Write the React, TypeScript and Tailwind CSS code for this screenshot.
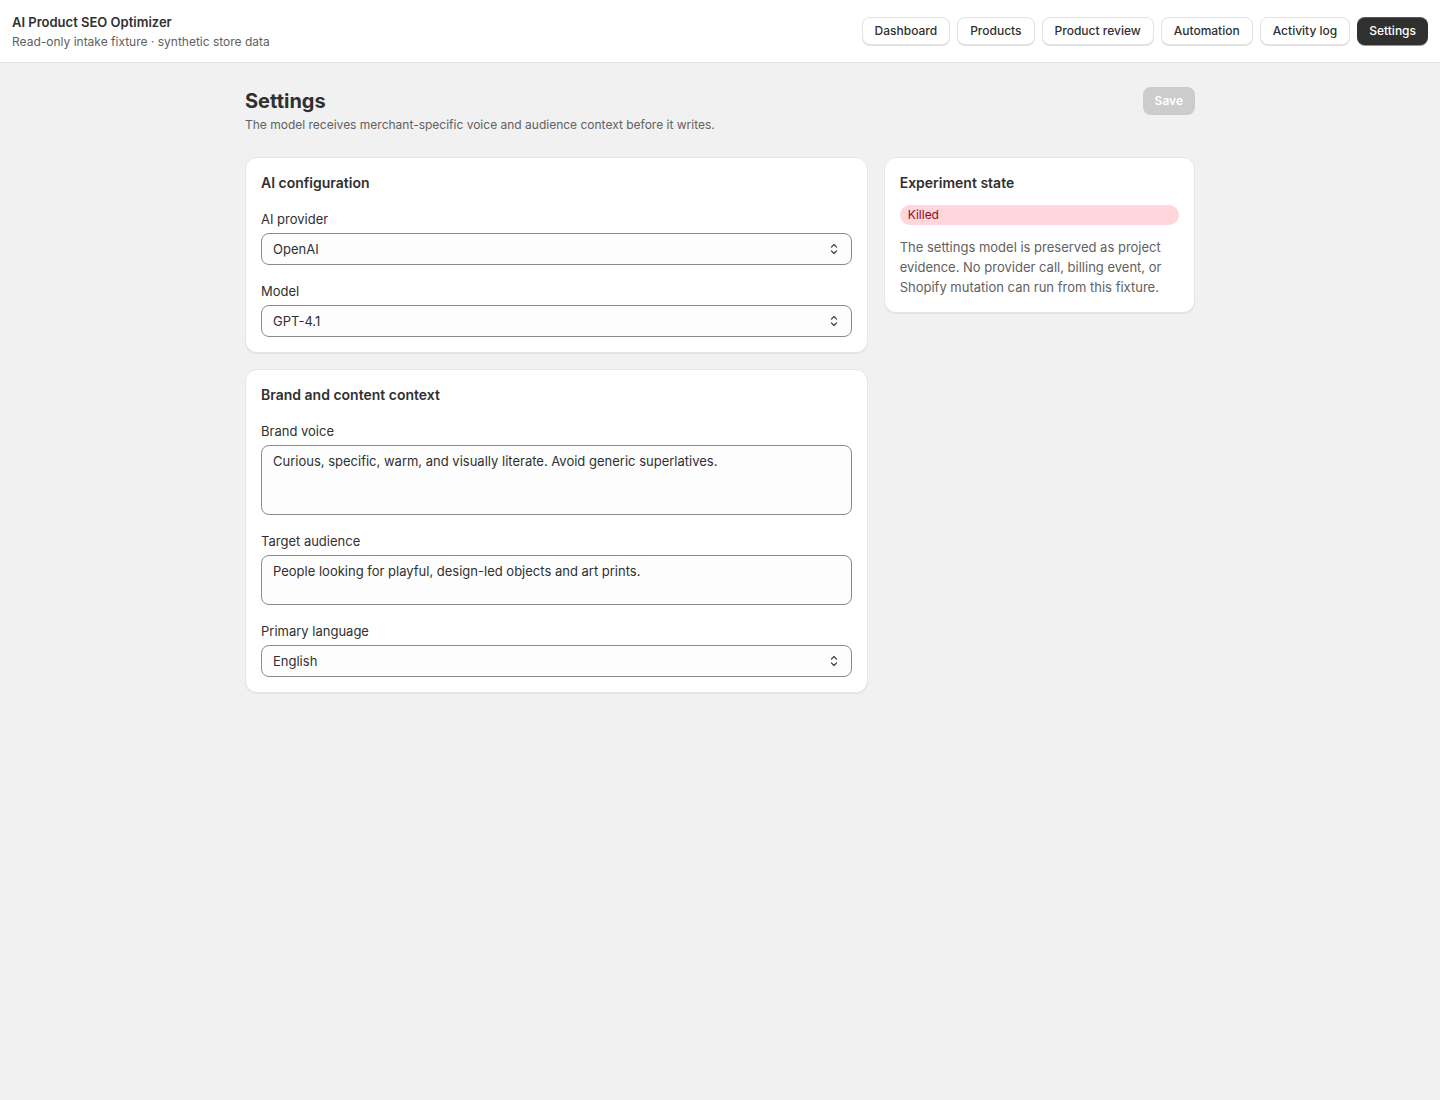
import type { ReactNode } from "react"

const NAV = ["Dashboard", "Products", "Product review", "Automation", "Activity log", "Settings"]

function Card({ children }: { children: ReactNode }) {
  return (
    <div className="rounded-xl bg-white p-[15px] border border-[#e6e6e6] shadow-[0_1px_0_rgba(0,0,0,0.06)]">
      {children}
    </div>
  )
}

function SelectIcon() {
  return (
    <svg width="12" height="16" viewBox="0 0 12 16" fill="none" stroke="#4a4a4a" strokeWidth="1.3" strokeLinecap="round" strokeLinejoin="round">
      <path d="M3.5 6 L6 3.5 L8.5 6" />
      <path d="M3.5 10 L6 12.5 L8.5 10" />
    </svg>
  )
}

function Select({ label, value }: { label: string; value: string }) {
  return (
    <div className="flex flex-col gap-1">
      <span className="text-[13px] leading-5 text-[#303030]">{label}</span>
      <div className="h-8 flex items-center justify-between rounded-lg border border-[#8a8a8a] bg-[#fdfdfd] px-[11px]">
        <span className="text-[13px] leading-5 text-[#303030]">{value}</span>
        <SelectIcon />
      </div>
    </div>
  )
}

function TextArea({ label, value, h }: { label: string; value: string; h: string }) {
  return (
    <div className="flex flex-col gap-1">
      <span className="text-[13px] leading-5 text-[#303030]">{label}</span>
      <div className={`${h} rounded-lg border border-[#8a8a8a] bg-[#fdfdfd] px-[11px] py-[5px] text-[13px] leading-5 text-[#303030]`}>
        {value}
      </div>
    </div>
  )
}

export default function App() {
  return (
    <div className="min-h-[1100px] bg-[#f1f1f1] text-[#303030] font-['Inter',sans-serif]">
      <header className="h-[63px] bg-white border-b border-[#e3e3e3] flex items-center justify-between px-3">
        <div className="flex flex-col pt-[1px]">
          <span className="text-[13px] leading-5 font-semibold">AI Product SEO Optimizer</span>
          <span className="text-[12px] leading-5 text-[#616161]">Read-only intake fixture · synthetic store data</span>
        </div>
        <nav className="flex gap-[7px]">
          {NAV.map((n) =>
            n === "Settings" ? (
              <button key={n} className="h-7 px-3 rounded-lg bg-[#303030] text-white text-[12px] font-medium shadow-[0_1px_0_rgba(0,0,0,0.4),inset_0_1px_0_rgba(255,255,255,0.2)]">
                {n}
              </button>
            ) : (
              <button key={n} className="h-7 px-3 rounded-lg bg-white border border-[#e3e3e3] text-[12px] font-medium text-[#303030] shadow-[0_1px_0_rgba(0,0,0,0.12)]">
                {n}
              </button>
            )
          )}
        </nav>
      </header>

      <main className="mx-auto w-[950px] pt-6">
        <div className="flex items-start justify-between">
          <div className="flex flex-col">
            <h1 className="text-[20px] leading-7 font-bold">Settings</h1>
            <p className="text-[12px] leading-5 text-[#616161]">The model receives merchant-specific voice and audience context before it writes.</p>
          </div>
          <button className="h-7 px-3 rounded-lg bg-[#cccccc] text-white text-[12px] font-semibold">Save</button>
        </div>

        <div className="mt-[22px] grid grid-cols-[2fr_1fr] gap-4 items-start">
          <div className="flex flex-col gap-4">
            <Card>
              <h2 className="text-[14px] leading-5 font-semibold">AI configuration</h2>
              <div className="mt-4 flex flex-col gap-4">
                <Select label="AI provider" value="OpenAI" />
                <Select label="Model" value="GPT-4.1" />
              </div>
            </Card>
            <Card>
              <h2 className="text-[14px] leading-5 font-semibold">Brand and content context</h2>
              <div className="mt-4 flex flex-col gap-4">
                <TextArea label="Brand voice" value="Curious, specific, warm, and visually literate. Avoid generic superlatives." h="h-[70px]" />
                <TextArea label="Target audience" value="People looking for playful, design-led objects and art prints." h="h-[50px]" />
                <Select label="Primary language" value="English" />
              </div>
            </Card>
          </div>
          <Card>
            <h2 className="text-[14px] leading-5 font-semibold">Experiment state</h2>
            <div className="mt-3 h-5 rounded-full bg-[#ffd6dc] px-2 flex items-center">
              <span className="text-[12px] text-[#8e0b21]">Killed</span>
            </div>
            <p className="mt-3 text-[13px] leading-5 text-[#616161]">
              The settings model is preserved as project evidence. No provider call, billing event, or Shopify mutation can run from this fixture.
            </p>
          </Card>
        </div>
      </main>
    </div>
  )
}
